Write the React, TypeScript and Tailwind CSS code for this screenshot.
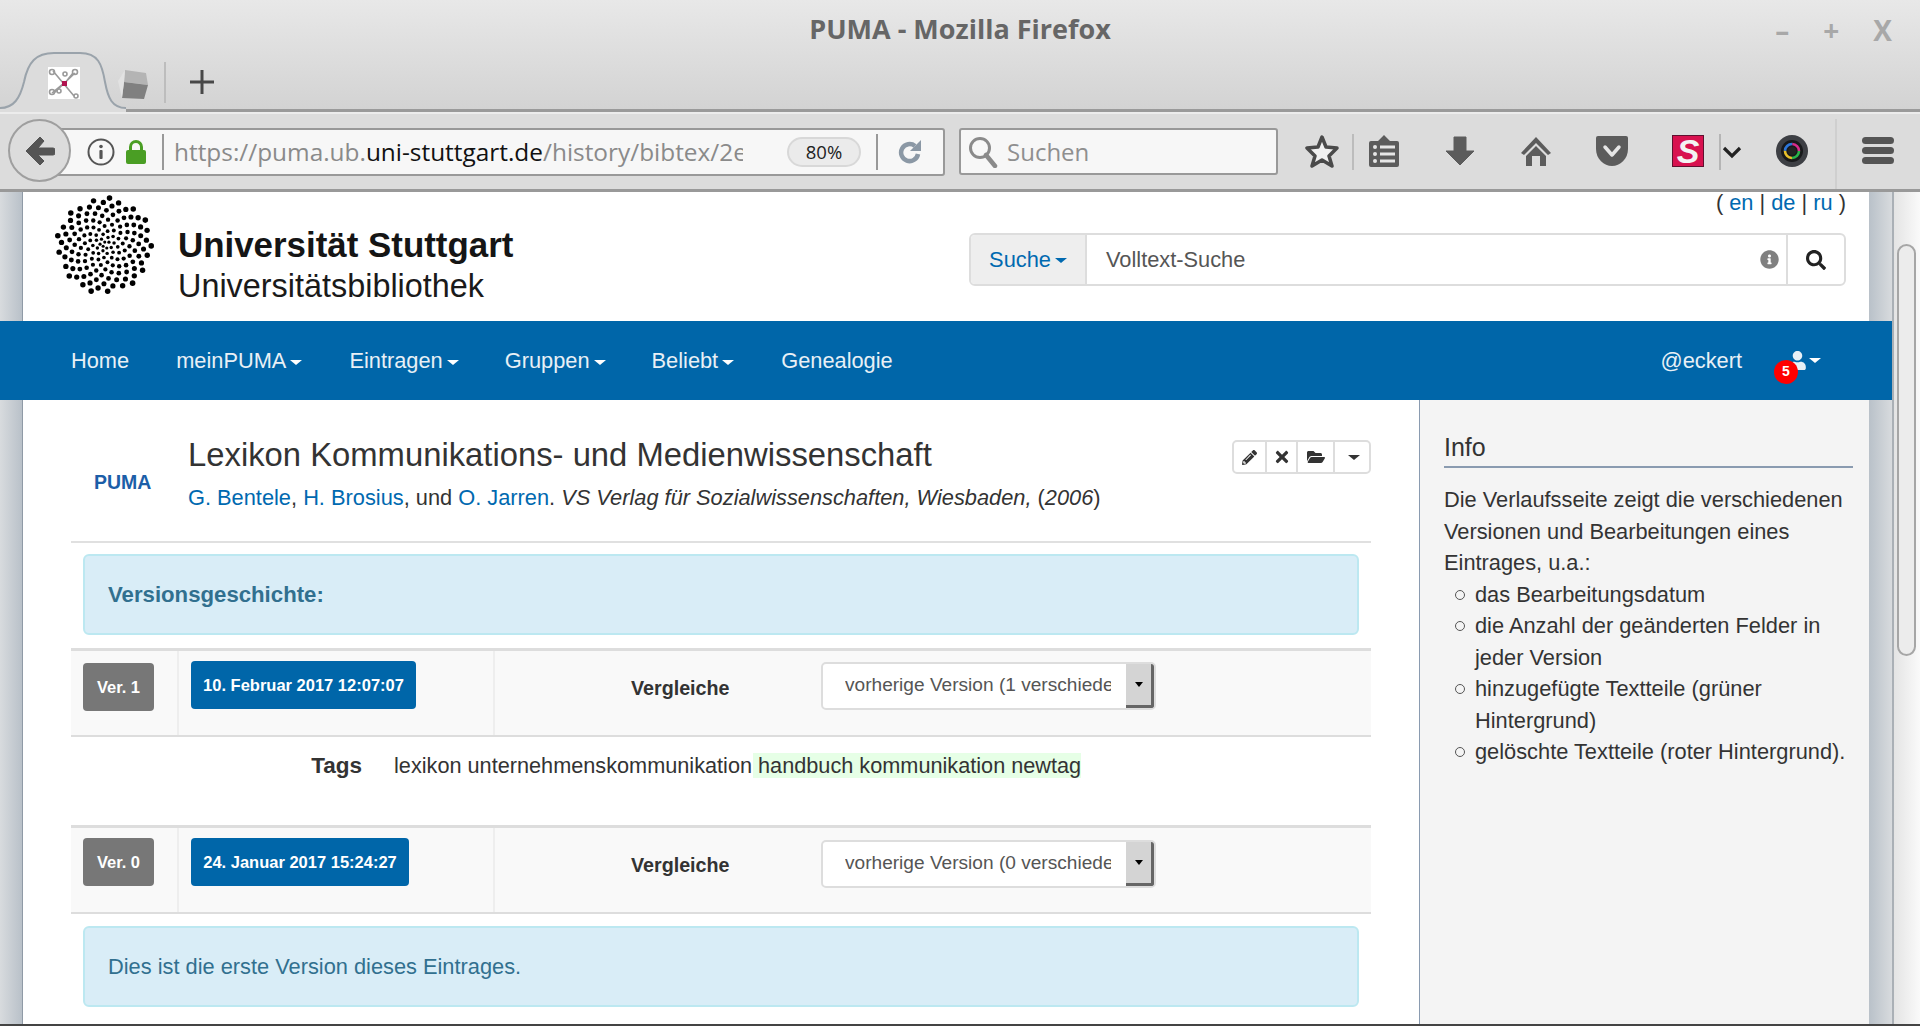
import { FaFolderOpen, FaInfoCircle, FaPencilAlt, FaSearch, FaTimes, FaUser } from "react-icons/fa"

const sans = "font-['Liberation_Sans',Arial,sans-serif]"

// sunflower of the university logo: dots get smaller and denser towards the middle
function logoDots() {
  const dots: { x: number; y: number; r: number }[] = []
  const count = 150
  const outer = 48
  for (let n = 1; n <= count; n++) {
    const radius = outer * Math.pow(n / count, 0.65)
    const a = n * 2.39996
    dots.push({ x: 49.5 + radius * Math.cos(a), y: 50 + radius * Math.sin(a), r: 1.5 + 1.3 * (radius / outer) })
  }
  return dots
}

function Logo() {
  return (
    <svg width="100" height="100" viewBox="0 0 100 100" className="mt-[3px] shrink-0">
      {logoDots().map((d, i) => (
        <circle key={i} cx={d.x} cy={d.y} r={d.r} fill="#000" />
      ))}
    </svg>
  )
}

function Caret({ color = "border-t-white" }: { color?: string }) {
  return <span className={`ml-[4px] inline-block h-0 w-0 border-x-[6px] border-t-[5px] border-x-transparent align-middle ${color}`} />
}

function NavLink({ label, caret, className }: { label: string; caret?: boolean; className: string }) {
  return (
    <span className={`pt-[2px] text-[21.8px] text-[#e8f0f6] ${className}`}>
      {label}
      {caret && <Caret />}
    </span>
  )
}

function TabStrip() {
  return (
    <div className="relative h-[112px] border-b-[3px] border-[#9a9a9a] bg-gradient-to-b from-[#e8e8e8] to-[#d3d3d3]">
      <div className="pt-[9px] text-center font-['Open_Sans',sans-serif] text-[27px] leading-[40px] font-bold text-[#666]">PUMA - Mozilla Firefox</div>
      <div className="absolute top-[18px] right-[28px] flex items-center gap-[34px] font-['Open_Sans',sans-serif] text-[28px] leading-[24px] font-bold text-[#a8a8a8]">
        <span>–</span>
        <span>+</span>
        <span>X</span>
      </div>
      {/* active tab outline */}
      <svg className="absolute top-[50px] left-0" width="130" height="62" viewBox="0 0 130 62">
        <path d="M0 59 C14 59 20 48 24 32 C28 12 36 3 54 3 L80 3 C98 3 102 14 105 32 C108 48 112 59 126 59 L126 62 L0 62 Z" fill="#dcdcdc" />
        <path d="M0 58 C14 58 20 48 24 32 C28 12 36 3 54 3 L80 3 C98 3 102 14 105 32 C108 48 112 58 126 58" fill="none" stroke="#9aa3ab" strokeWidth="2" />
      </svg>
      <svg className="absolute top-[67px] left-[48px] bg-white" width="32" height="32" viewBox="0 0 32 32">
        <g stroke="#9a9a9a" strokeWidth="1.6" fill="none">
          <path d="M5 4 L26 29 M27 6 L6 26 M17 16 L25 6 M16 16 L4 26" />
          <circle cx="4" cy="5" r="2.5" />
          <circle cx="27" cy="5" r="2.5" />
          <circle cx="17" cy="7" r="2" />
          <circle cx="4" cy="25" r="2.5" />
          <circle cx="11" cy="24" r="2" />
          <circle cx="28" cy="29" r="2" />
        </g>
        <rect x="14" y="14" width="5" height="5" fill="#b0144f" />
      </svg>
      <svg className="absolute top-[69px] left-[117px]" width="32" height="32" viewBox="0 0 32 32">
        <path d="M8 1 L29 4 L31 16 L24 15 L7 13 Z" fill="#b4b4b4" />
        <path d="M7 13 L31 16 L27 30 L5 29 Z" fill="#808080" />
        <path d="M8 1 L1 12 L5 29 L7 13 Z" fill="#e2e2e2" />
      </svg>
      <div className="absolute top-[62px] left-[164px] h-[41px] w-[2px] bg-[#bdbdbd]" />
      <svg className="absolute top-[70px] left-[190px]" width="24" height="24" viewBox="0 0 24 24">
        <path d="M10.5 0 H13.5 V10.5 H24 V13.5 H13.5 V24 H10.5 V13.5 H0 V10.5 H10.5 Z" fill="#484848" />
      </svg>
    </div>
  )
}

function UrlBar() {
  return (
    <div className="flex h-[48px] w-[890px] items-center rounded-[3px] border-2 border-[#999] bg-[#f7f7f7] font-['Open_Sans',sans-serif]">
      <svg className="ml-[30px] shrink-0" width="28" height="28" viewBox="0 0 28 28">
        <circle cx="14" cy="14" r="12.5" fill="none" stroke="#555" strokeWidth="2" />
        <circle cx="14" cy="8.5" r="1.8" fill="#555" />
        <rect x="12.4" y="12" width="3.2" height="9" rx="1" fill="#555" />
      </svg>
      <svg className="ml-[11px] shrink-0" width="20" height="24" viewBox="0 0 20 24">
        <path d="M4.5 11 V7 a5.5 5.5 0 0 1 11 0 V11" fill="none" stroke="#4a9e24" strokeWidth="3" />
        <rect x="0" y="10" width="20" height="14" rx="2" fill="#4a9e24" />
      </svg>
      <div className="ml-[16px] h-[36px] w-[2px] shrink-0 bg-[#999]" />
      <div className="ml-[10px] w-[569px] shrink-0 overflow-hidden text-[24.4px] leading-[34px] whitespace-nowrap text-[#8a8a8a]">
        https://puma.ub.<span className="text-[#111]">uni-stuttgart.de</span>/history/bibtex/2e8f1b
      </div>
      <div className="ml-[44px] flex h-[30px] w-[74px] shrink-0 items-center justify-center rounded-full border-2 border-[#d8d8d8] bg-[#ebebeb] text-[18.5px] text-[#222]">80%</div>
      <div className="ml-[15px] h-[36px] w-[2px] shrink-0 bg-[#999]" />
      <svg className="ml-[20px] shrink-0" width="24" height="26" viewBox="0 0 24 26">
        <path d="M20 15 a8.5 8.5 0 1 1 -3 -8" fill="none" stroke="#8b98a5" strokeWidth="4.5" />
        <path d="M23 1 V12 H12 Z" fill="#8b98a5" />
      </svg>
    </div>
  )
}

function Toolbar() {
  const iconFill = "#5c5c5c"
  return (
    <div className="relative flex h-[80px] items-center border-t-2 border-b-[3px] border-t-[#ececec] border-b-[#999] bg-[#dcdcdc]">
      <div className="absolute top-[5px] left-[8px] z-10 flex h-[63px] w-[63px] items-center justify-center rounded-full border-2 border-[#9f9f9f] bg-[#dcdcdc]">
        <svg width="30" height="32" viewBox="0 0 30 32">
          <path d="M15 2 L19 6 L13 13 H28 a2 2 0 0 1 2 2 V18 a2 2 0 0 1 -2 2 H13 L19 26 L15 30 L1 16 Z" fill="#555" stroke="#555" strokeLinejoin="round" strokeWidth="1" />
        </svg>
      </div>
      <div className="ml-[55px] shrink-0">
        <UrlBar />
      </div>
      <div className="ml-[14px] flex h-[47px] w-[319px] shrink-0 items-center rounded-[3px] border-2 border-[#999] bg-[#f7f7f7] font-['Open_Sans',sans-serif]">
        <svg className="ml-[7px]" width="30" height="32" viewBox="0 0 30 32">
          <circle cx="12" cy="12" r="9.5" fill="none" stroke="#8a8a8a" strokeWidth="3" />
          <path d="M18 19 L27 30" stroke="#8a8a8a" strokeWidth="4.5" strokeLinecap="round" />
        </svg>
        <span className="ml-[9px] text-[24px] text-[#8f8f8f]">Suchen</span>
      </div>
      <svg className="absolute top-[20px] left-[1305px]" width="34" height="34" viewBox="0 0 34 34">
        <path d="M17 3 L21 13 L32 14 L24 22 L27 32 L17 26 L7 32 L10 22 L2 14 L13 13 Z" fill="#f0f0f0" stroke="#4a4a4a" strokeWidth="3.5" strokeLinejoin="round" />
      </svg>
      <div className="absolute top-[20px] left-[1352px] h-[36px] w-[2px] bg-[#bcbcbc]" />
      <svg className="absolute top-[21px] left-[1369px]" width="30" height="32" viewBox="0 0 30 32">
        <path d="M15 0 L21 6 H28 a2 2 0 0 1 2 2 V30 a2 2 0 0 1 -2 2 H2 a2 2 0 0 1 -2 -2 V8 a2 2 0 0 1 2 -2 H9 Z" fill={iconFill} />
        <g fill="#e6e6e6">
          <circle cx="6" cy="12" r="2" />
          <circle cx="6" cy="19" r="2" />
          <circle cx="6" cy="26" r="2" />
          <rect x="11" y="10.5" width="15" height="3" />
          <rect x="11" y="17.5" width="15" height="3" />
          <rect x="11" y="24.5" width="15" height="3" />
        </g>
      </svg>
      <svg className="absolute top-[22px] left-[1445px]" width="30" height="30" viewBox="0 0 30 30">
        <path d="M9 1 H21 V15 H29 L15 29 L1 15 H9 Z" fill={iconFill} stroke={iconFill} strokeLinejoin="round" />
      </svg>
      <svg className="absolute top-[22px] left-[1521px]" width="30" height="30" viewBox="0 0 30 30">
        <path d="M15 1 L30 17 L27 19 L15 7 L3 19 L0 17 Z" fill={iconFill} />
        <path d="M15 10 L25 20 V30 H19 V20 H11 V30 H5 V20 Z" fill={iconFill} />
      </svg>
      <svg className="absolute top-[21px] left-[1596px]" width="32" height="32" viewBox="0 0 32 32">
        <path d="M2 1 H30 a2 2 0 0 1 2 2 V14 C32 24 24 31 16 31 C8 31 0 24 0 14 V3 a2 2 0 0 1 2 -2 Z" fill={iconFill} />
        <path d="M9 12 L16 20 L23 12" fill="none" stroke="#e6e6e6" strokeWidth="3.5" strokeLinecap="round" strokeLinejoin="round" />
      </svg>
      <div className="absolute top-[21px] left-[1672px] flex h-[32px] w-[32px] items-center justify-center border border-[#60102f] bg-[#d8114f] font-['Liberation_Sans',sans-serif] text-[34px] leading-none font-bold text-[#f3f3f3] italic">S</div>
      <div className="absolute top-[20px] left-[1719px] h-[36px] w-[2px] bg-[#b5b5b5]" />
      <svg className="absolute top-[31px] left-[1722px]" width="20" height="14" viewBox="0 0 20 14">
        <path d="M2 3 L10 11 L18 3" fill="none" stroke="#222" strokeWidth="3.2" />
      </svg>
      <svg className="absolute top-[21px] left-[1776px]" width="32" height="32" viewBox="0 0 32 32">
        <circle cx="16" cy="16" r="16" fill="#3d3f44" />
        <circle cx="16" cy="16" r="11" fill="#18191b" />
        <circle cx="16" cy="16" r="7" fill="none" stroke="#29b34a" strokeWidth="2.6" strokeDasharray="11 33" />
        <circle cx="16" cy="16" r="7" fill="none" stroke="#d92b8c" strokeWidth="2.6" strokeDasharray="11 33" strokeDashoffset="11" />
        <circle cx="16" cy="16" r="7" fill="none" stroke="#2d76d9" strokeWidth="2.6" strokeDasharray="11 33" strokeDashoffset="22" />
        <circle cx="16" cy="16" r="7" fill="none" stroke="#e8c02a" strokeWidth="2.6" strokeDasharray="11 33" strokeDashoffset="33" />
        <circle cx="16" cy="16" r="4" fill="#222" />
      </svg>
      <div className="absolute top-[5px] left-[1835px] h-[70px] w-[2px] bg-[#cfcfcf]" />
      <div className="absolute top-[23px] left-[1862px] flex w-[32px] flex-col gap-[3px]">
        <div className="h-[7px] rounded-full bg-[#555]" />
        <div className="h-[7px] rounded-full bg-[#555]" />
        <div className="h-[7px] rounded-full bg-[#555]" />
      </div>
    </div>
  )
}

function PageHeader() {
  return (
    <div className="flex h-[129px] pl-[32px] text-[#111]">
      <Logo />
      <div className="ml-[23px] pt-[30px]">
        <div className="text-[34.9px] leading-[45px] font-bold text-[#151515]">Universität Stuttgart</div>
        <div className="text-[32.4px] leading-[38px] text-[#1a1a1a]">Universitätsbibliothek</div>
      </div>
      <div className="mr-[23px] ml-auto flex flex-col items-end">
        <div className="h-[41px] text-[21.8px] leading-[22px] text-[#333]">
          ( <span className="text-[#0069b0]">en</span> | <span className="text-[#0069b0]">de</span> | <span className="text-[#0069b0]">ru</span> )
        </div>
        <div className="flex h-[53px] w-[877px] overflow-hidden rounded-[6px] border-2 border-[#ddd] text-[21.8px]">
          <div className="flex w-[116px] items-center justify-center border-r-2 border-[#ddd] bg-[#eeeeee] pt-[1px] text-[#0069b0]">
            Suche
            <Caret color="border-t-[#0069b0]" />
          </div>
          <div className="flex flex-1 items-center pt-[1px] pl-[19px] text-[#555]">Volltext-Suche</div>
          <div className="flex w-[26px] items-center text-[19px] text-[#808080]">
            <FaInfoCircle />
          </div>
          <div className="flex w-[58px] items-center justify-center border-l-2 border-[#ddd] text-[20px] text-[#222]">
            <FaSearch />
          </div>
        </div>
      </div>
    </div>
  )
}

function NavBar() {
  return (
    <div className="relative -ml-[23px] flex h-[79px] w-[1892px] items-center bg-[#0066a9]">
      <NavLink label="Home" className="ml-[71px]" />
      <NavLink label="meinPUMA" caret className="ml-[47px]" />
      <NavLink label="Eintragen" caret className="ml-[47px]" />
      <NavLink label="Gruppen" caret className="ml-[46px]" />
      <NavLink label="Beliebt" caret className="ml-[46px]" />
      <NavLink label="Genealogie" className="ml-[47px]" />
      <NavLink label="@eckert" className="ml-auto" />
      <div className="relative mr-[71px] ml-[35px] flex h-[24px] w-[44px] items-center justify-end">
        <FaUser className="-mr-[2px] text-[19px] text-[#e8f0f6]" />
        <Caret />
        <span className="absolute top-[11px] left-[-3px] flex h-[24px] w-[24px] items-center justify-center rounded-full bg-[#f00] text-[14px] font-bold text-white">5</span>
      </div>
    </div>
  )
}

function ToolButton({ children, className }: { children: React.ReactNode; className: string }) {
  return <div className={`flex h-full items-center justify-center border-r-2 border-[#ddd] text-[18px] text-[#333] last:border-r-0 ${className}`}>{children}</div>
}

function EntryHead() {
  return (
    <div className="flex h-[143px] border-b-2 border-[#e0e0e0]">
      <div className="w-[117px] pt-[69px] pl-[23px] text-[19.5px] leading-[26px] font-bold text-[#1c5ea8]">PUMA</div>
      <div className="flex-1 pt-[33px]">
        <div className="text-[32.8px] leading-[44px] text-[#333]">Lexikon Kommunikations- und Medienwissenschaft</div>
        <div className="mt-[6px] text-[21.8px] leading-[30px] text-[#333]">
          <span className="text-[#0069b0]">G. Bentele</span>, <span className="text-[#0069b0]">H. Brosius</span>, und <span className="text-[#0069b0]">O. Jarren</span>. <i>VS Verlag für Sozialwissenschaften, Wiesbaden,</i> (<i>2006</i>)
        </div>
      </div>
      <div className="mt-[40px] flex h-[34px] w-[139px] rounded-[5px] border-2 border-[#ddd]">
        <ToolButton className="w-[33px]">
          <FaPencilAlt className="text-[15px]" />
        </ToolButton>
        <ToolButton className="w-[31px]">
          <FaTimes />
        </ToolButton>
        <ToolButton className="w-[37px]">
          <FaFolderOpen />
        </ToolButton>
        <ToolButton className="flex-1">
          <Caret color="border-t-[#333]" />
        </ToolButton>
      </div>
    </div>
  )
}

function VersionSelect({ label, top }: { label: string; top: string }) {
  return (
    <div className={`flex h-[48px] w-[335px] overflow-hidden rounded-[5px] border-2 border-[#ddd] bg-white ${top}`}>
      <div className="ml-[22px] w-[266px] overflow-hidden text-[19.1px] leading-[42px] whitespace-nowrap text-[#555]">{label}</div>
      <div className="ml-auto flex w-[28px] items-center justify-center border-r-[3px] border-b-[3px] border-[#666] bg-[#d4d4d4]">
        <span className="h-0 w-0 border-x-[4px] border-t-[5px] border-x-transparent border-t-black" />
      </div>
    </div>
  )
}

interface VersionRowProps {
  version: string
  date: string
  dateWidth: string
  badgeTop: string
  selectLabel: string
  selectTop: string
  labelTop: string
}

function VersionRow({ version, date, dateWidth, badgeTop, selectLabel, selectTop, labelTop }: VersionRowProps) {
  return (
    <div className="flex h-[89px] border-t-[3px] border-b-2 border-t-[#dddddd] border-b-[#dddddd] bg-[#f9f9f9]">
      <div className="w-[108px] border-r-2 border-[#eee]">
        <div className={`ml-[12px] flex h-[48px] w-[71px] items-center justify-center rounded-[4px] bg-[#777] text-[16.5px] font-bold text-white ${badgeTop}`}>{version}</div>
      </div>
      <div className="w-[316px] border-r-2 border-[#eee]">
        <div className={`mt-[10px] ml-[12px] flex h-[48px] items-center justify-center rounded-[4px] bg-[#0066a9] text-[16.5px] font-bold text-white ${dateWidth}`}>{date}</div>
      </div>
      <div className={`w-[326px] pl-[136px] text-[19.7px] leading-[28px] font-bold whitespace-nowrap text-[#333] ${labelTop}`}>Vergleiche</div>
      <VersionSelect label={selectLabel} top={selectTop} />
    </div>
  )
}

function Alert({ children, className }: { children: React.ReactNode; className: string }) {
  return <div className={`mx-[12px] flex h-[81px] items-center rounded-[6px] border-2 border-[#bce8f1] bg-[#d9edf7] pl-[23px] text-[#31708f] ${className}`}>{children}</div>
}

function EntryColumn() {
  return (
    <div className="w-[1396px] shrink-0 pr-[48px] pl-[48px]">
      <EntryHead />
      <Alert className="mt-[11px] text-[22.2px] font-bold">Versionsgeschichte:</Alert>
      <div className="mt-[13px]">
        <VersionRow version="Ver. 1" date="10. Februar 2017 12:07:07" dateWidth="w-[225px]" badgeTop="mt-[12px]" selectLabel="vorherige Version (1 verschiedene Felder)" selectTop="mt-[11px]" labelTop="pt-[23px]" />
      </div>
      <div className="flex h-[88px] pt-[14px] text-[21.7px] leading-[29px]">
        <div className="w-[291px] text-right text-[22.5px] font-bold text-[#333]">Tags</div>
        <div className="ml-[32px] text-[#333]">
          lexikon unternehmenskommunikation<span className="ml-[1px] bg-[#e6ffe6] pl-[5px]">handbuch kommunikation newtag</span>
        </div>
      </div>
      <VersionRow version="Ver. 0" date="24. Januar 2017 15:24:27" dateWidth="w-[218px]" badgeTop="mt-[10px]" selectLabel="vorherige Version (0 verschiedene Felder)" selectTop="mt-[12px]" labelTop="pt-[23px]" />
      <Alert className="mt-[12px] pt-[2px] text-[21.8px]">Dies ist die erste Version dieses Eintrages.</Alert>
    </div>
  )
}

function InfoColumn() {
  const items = ["das Bearbeitungsdatum", "die Anzahl der geänderten Felder in jeder Version", "hinzugefügte Textteile (grüner Hintergrund)", "gelöschte Textteile (roter Hintergrund)."]
  return (
    <div className="flex-1 border-l border-[#8a9bb0] bg-[#f4f4f4] pt-[30px] pr-[16px] pl-[24px] text-[21.8px] leading-[31.5px] text-[#333]">
      <div className="mr-[12px] border-b-2 border-[#8a9bb0] pb-[1px] text-[25px] leading-[35px]">Info</div>
      <div className="mt-[16px] mr-[12px]">Die Verlaufsseite zeigt die verschiedenen Versionen und Bearbeitungen eines Eintrages, u.a.:</div>
      <ul className="ml-[31px] w-[390px]">
        {items.map((item) => (
          <li key={item} className="relative">
            <span className="absolute top-[11px] -left-[20px] h-[10px] w-[10px] rounded-full border-[1.5px] border-[#555]" />
            {item}
          </li>
        ))}
      </ul>
    </div>
  )
}

function ScrollBar() {
  return (
    <div className="w-[28px] shrink-0 border-l-2 border-[#aab0b6] bg-gradient-to-r from-[#e4e4e4] to-[#fafafa] pt-[52px] pl-[3px]">
      <div className="h-[412px] w-[19px] rounded-full border-2 border-[#a6a6a6] bg-[#ececec]" />
    </div>
  )
}

export default function App() {
  return (
    <div className={`flex h-[1026px] w-[1920px] flex-col overflow-hidden ${sans}`}>
      <TabStrip />
      <Toolbar />
      <div className="flex h-[834px] border-b-2 border-[#444]">
        <div className="flex w-[1892px] bg-gradient-to-r from-[#d8dbde] via-[#b9c1c9] to-[#d8dbde]">
          <div className="w-[23px] shrink-0 border-r border-[#8f9aa6] bg-gradient-to-r from-[#d8dbde] to-[#b9c1c9]" />
          <div className="flex w-[1846px] shrink-0 flex-col bg-white">
            <PageHeader />
            <NavBar />
            <div className="flex flex-1 overflow-hidden">
              <EntryColumn />
              <InfoColumn />
            </div>
          </div>
          <div className="flex-1 bg-gradient-to-r from-[#b9c1c9] to-[#d8dbde]" />
        </div>
        <ScrollBar />
      </div>
    </div>
  )
}
